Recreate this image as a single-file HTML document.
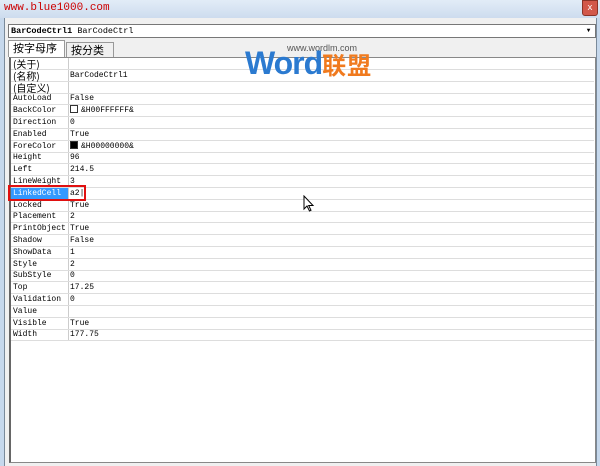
<!DOCTYPE html>
<html><head><meta charset="utf-8"><style>
*{margin:0;padding:0;box-sizing:border-box}
body{width:600px;height:466px;overflow:hidden;background:#f0f0f0;position:relative;font-family:"Liberation Mono","Noto Sans CJK SC",monospace;font-size:8px;color:#000}
.title{position:absolute;left:0;top:0;width:600px;height:18px;background:linear-gradient(#e2ecf7,#cddcee)}
.title span{position:absolute;left:4px;top:2px;color:#c00;font-size:11px;font-family:"Liberation Mono",monospace}
.x{position:absolute;right:2px;top:0;width:16px;height:16px;background:#d2584a;border:1px solid #8a3328;color:#fff;font-size:9px;text-align:center;line-height:14px;border-radius:0 0 3px 3px}
.lf{position:absolute;left:0;top:18px;width:5px;height:448px;background:#c6d8ec;border-right:1px solid #7a8a9a}
.rf{position:absolute;right:0;top:18px;width:4px;height:448px;background:#c6d8ec;border-left:1px solid #7a8a9a}
.combo{position:absolute;left:8px;top:24px;width:588px;height:14px;background:#fff;border:1px solid #777;font-size:8.5px;line-height:12px;padding-left:2px}
.dd{position:absolute;right:1px;top:1px;width:11px;height:10px;font-size:6px;text-align:center;line-height:10px}
.tabs{position:absolute;left:8px;top:40px;height:17px}
.tab{position:absolute;top:0;height:17px;font-family:"Noto Sans CJK SC",sans-serif;font-size:11px;line-height:15px;padding:0 4px;border:1px solid #999;border-bottom:none;background:#f0f0f0}
.grid{position:absolute;left:9px;top:57px;width:587px;height:406px;background:#fff;border:1px solid #888;border-left:2px solid #666}
.row{position:absolute;left:0;width:583px;height:12px;border-bottom:1px solid #ddd;line-height:12px}
.n{position:absolute;left:2px;top:0}
.v{position:absolute;left:59px;top:0}
.sep{position:absolute;left:57px;top:0;width:1px;height:282px;background:#ccc}
.cn{font-family:"Noto Sans CJK SC",sans-serif;font-size:10px;line-height:11px}
.sw{display:inline-block;width:8px;height:8px;border:1px solid #333;vertical-align:-1px;margin-right:3px}
.red{position:absolute;left:8px;top:185px;width:78px;height:16px;border:2px solid #e01010}
.wm{position:absolute;left:245px;top:40px}
</style></head><body>
<div class="title"><span>www.blue1000.com</span><div class="x">x</div></div>
<div class="lf"></div><div class="rf"></div>
<div class="combo"><b>BarCodeCtrl1</b> BarCodeCtrl<div class="dd">▼</div></div>
<div class="tabs"><div class="tab" style="left:0;width:57px;background:#fff">按字母序</div><div class="tab" style="left:58px;width:48px;top:2px;height:15px">按分类序</div></div>
<div class="grid">
<div class="sep"></div>
<div class="row" style="top:0"><span class="n cn">(关于)</span></div>
<div class="row" style="top:12px"><span class="n cn">(名称)</span><span class="v">BarCodeCtrl1</span></div>
<div class="row" style="top:24px"><span class="n cn">(自定义)</span></div>
<div class="row" style="top:35px"><span class="n">AutoLoad</span><span class="v">False</span></div>
<div class="row" style="top:47px"><span class="n">BackColor</span><span class="v"><i class="sw" style="background:#fff"></i>&amp;H00FFFFFF&amp;</span></div>
<div class="row" style="top:59px"><span class="n">Direction</span><span class="v">0</span></div>
<div class="row" style="top:71px"><span class="n">Enabled</span><span class="v">True</span></div>
<div class="row" style="top:83px"><span class="n">ForeColor</span><span class="v"><i class="sw" style="background:#000"></i>&amp;H00000000&amp;</span></div>
<div class="row" style="top:94px"><span class="n">Height</span><span class="v">96</span></div>
<div class="row" style="top:106px"><span class="n">Left</span><span class="v">214.5</span></div>
<div class="row" style="top:118px"><span class="n">LineWeight</span><span class="v">3</span></div>
<div class="row" style="top:130px"><span class="n" style="background:#3399ff;color:#fff;left:0;padding:0 2px;width:57px">LinkedCell</span><span class="v">a2|</span></div>
<div class="row" style="top:142px"><span class="n">Locked</span><span class="v">True</span></div>
<div class="row" style="top:153px"><span class="n">Placement</span><span class="v">2</span></div>
<div class="row" style="top:165px"><span class="n">PrintObject</span><span class="v">True</span></div>
<div class="row" style="top:177px"><span class="n">Shadow</span><span class="v">False</span></div>
<div class="row" style="top:189px"><span class="n">ShowData</span><span class="v">1</span></div>
<div class="row" style="top:201px"><span class="n">Style</span><span class="v">2</span></div>
<div class="row" style="top:212px"><span class="n">SubStyle</span><span class="v">0</span></div>
<div class="row" style="top:224px"><span class="n">Top</span><span class="v">17.25</span></div>
<div class="row" style="top:236px"><span class="n">Validation</span><span class="v">0</span></div>
<div class="row" style="top:248px"><span class="n">Value</span></div>
<div class="row" style="top:260px"><span class="n">Visible</span><span class="v">True</span></div>
<div class="row" style="top:271px"><span class="n">Width</span><span class="v">177.75</span></div>
</div>
<div class="red"></div>
<div class="wm">
<div style="position:absolute;left:42px;top:3px;font-family:'Liberation Sans',sans-serif;font-size:9px;color:#555;white-space:nowrap">www.wordlm.com</div>
<div style="position:absolute;left:0;top:7px;font-family:'Liberation Sans',sans-serif;font-weight:bold;font-size:32px;color:#2b7ad0;line-height:32px;white-space:nowrap;letter-spacing:-1px">Word<span style="font-family:'Noto Sans CJK SC',sans-serif;color:#f07a1e;font-size:24px;letter-spacing:1px">联盟</span></div>
</div>
<svg style="position:absolute;left:303px;top:195px" width="12" height="18" viewBox="0 0 12 18"><path d="M1 1 L1 14 L4 11 L6.5 16 L8 15.3 L5.7 10.5 L10 10.5 Z" fill="#fff" stroke="#000" stroke-width="1"/></svg>
</body></html>
